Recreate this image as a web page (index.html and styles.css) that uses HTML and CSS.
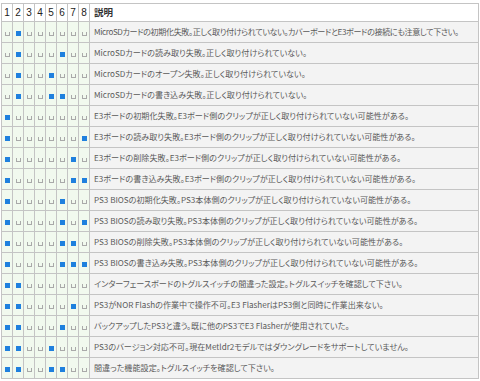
FILE: index.html
```html
<!DOCTYPE html>
<html lang="ja">
<head>
<meta charset="utf-8">
<title>エラーコード</title>
<link rel="stylesheet" href="styles.css">
</head>
<body>
<table class="codes">
  <colgroup>
    <col class="c-num"><col class="c-num"><col class="c-num"><col class="c-num">
    <col class="c-num"><col class="c-num"><col class="c-num"><col class="c-num">
    <col class="c-desc">
  </colgroup>
  <thead>
    <tr>
      <th class="num">1</th><th class="num">2</th><th class="num">3</th><th class="num">4</th>
      <th class="num">5</th><th class="num">6</th><th class="num">7</th><th class="num">8</th>
      <th class="desc-h">説明</th>
    </tr>
  </thead>
  <tbody id="rows"></tbody>
</table>
<script src="app.js"></script>
</body>
</html>
```

FILE: app.js
```js
const rows = [
  ["01000000", "MicroSDカードの初期化失敗。正しく取り付けられていない。カバーボードとE3ボードの接続にも注意して下さい。", "tight"],
  ["01000100", "MicroSDカードの読み取り失敗。正しく取り付けられていない。"],
  ["01001000", "MicroSDカードのオープン失敗。正しく取り付けられていない。"],
  ["01001100", "MicroSDカードの書き込み失敗。正しく取り付けられていない。"],
  ["10000000", "E3ボードの初期化失敗。E3ボード側のクリップが正しく取り付けられていない可能性がある。"],
  ["10000001", "E3ボードの読み取り失敗。E3ボード側のクリップが正しく取り付けられていない可能性がある。"],
  ["10000010", "E3ボードの削除失敗。E3ボード側のクリップが正しく取り付けられていない可能性がある。"],
  ["10000011", "E3ボードの書き込み失敗。E3ボード側のクリップが正しく取り付けられていない可能性がある。"],
  ["10000100", "PS3 BIOSの初期化失敗。PS3本体側のクリップが正しく取り付けられていない可能性がある。"],
  ["10000101", "PS3 BIOSの読み取り失敗。PS3本体側のクリップが正しく取り付けられていない可能性がある。"],
  ["10000110", "PS3 BIOSの削除失敗。PS3本体側のクリップが正しく取り付けられていない可能性がある。"],
  ["10000111", "PS3 BIOSの書き込み失敗。PS3本体側のクリップが正しく取り付けられていない可能性がある。"],
  ["11000000", "インターフェースボードのトグルスイッチの間違った設定。トグルスイッチを確認して下さい。"],
  ["11000010", "PS3がNOR Flashの作業中で操作不可。E3 FlasherはPS3側と同時に作業出来ない。"],
  ["11000100", "バックアップしたPS3と違う。既に他のPS3でE3 Flasherが使用されていた。"],
  ["11001000", "PS3のバージョン対応不可。現在Metldr2モデルではダウングレードをサポートしていません。"],
  ["11001100", "間違った機能設定。トグルスイッチを確認して下さい。"]
];
const body = document.getElementById("rows");
for (const [bits, text, extra] of rows) {
  const tr = document.createElement("tr");
  for (const b of bits) {
    const td = document.createElement("td");
    td.className = "num";
    const s = document.createElement("span");
    s.className = b === "1" ? "led on" : "led off";
    td.appendChild(s);
    tr.appendChild(td);
  }
  const d = document.createElement("td");
  d.className = extra ? "desc " + extra : "desc";
  d.textContent = text;
  tr.appendChild(d);
  body.appendChild(tr);
}
```

FILE: styles.css
```css
html, body {
  margin: 0;
  padding: 0;
  background: #ffffff;
}
body {
  padding: 3px 2px 0 1px;
  font-family: "Noto Sans CJK JP", "Liberation Sans", sans-serif;
}
.codes {
  width: 478px;
  border-collapse: collapse;
  table-layout: fixed;
  border: 1px solid #c4c4c4;
}
.c-num { width: 11px; }
.codes th, .codes td {
  border: 1px solid #c4c4c4;
  padding: 0;
}
.codes thead th {
  height: 17px;
  background: #ffffff;
  color: #222;
  font-family: "Liberation Sans", "Noto Sans CJK JP", sans-serif;
  font-size: 10px;
  font-weight: normal;
  line-height: 17px;
  text-align: center;
}
.codes thead th.desc-h {
  text-align: left;
  padding-left: 4px;
  font-family: "Noto Sans CJK JP", sans-serif;
  font-weight: bold;
  font-size: 9.5px;
  color: #333;
}
.codes tbody td {
  height: 20px;
}
.codes tbody td.num {
  background: #f1f9ee;
  text-align: center;
  vertical-align: middle;
  line-height: 0;
}
.led {
  display: inline-block;
  box-sizing: border-box;
  margin-top: 3px;
}
.led.on {
  width: 5px;
  height: 5px;
  background: #1f80de;
}
.led.off {
  width: 5px;
  height: 4px;
  border: 1px solid #a9a9a9;
  border-top: none;
  margin-top: 4px;
}
.codes tbody td.desc {
  background: #f3f3f3;
  color: #5a5a5a;
  font-size: 8.1px;
  font-feature-settings: "palt";
  line-height: 20px;
  padding-left: 4px;
  white-space: nowrap;
  overflow: hidden;
}
.codes tbody td.desc.tight {
  letter-spacing: -0.4px;
}
```
